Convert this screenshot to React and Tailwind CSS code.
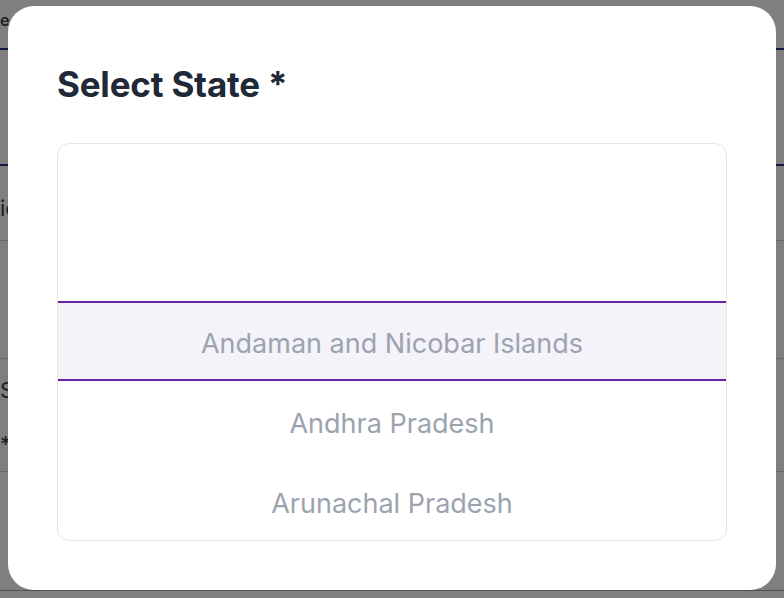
import { useState } from "react";

const states = ["Andaman and Nicobar Islands", "Andhra Pradesh", "Arunachal Pradesh"];

const App = () => {
  const [selected] = useState(0);

  return (
    <div className="relative h-screen w-full overflow-hidden bg-white font-['Inter',sans-serif] text-[#374151]">
      {/* page behind the modal */}
      <div className="flex flex-col">
        <div className="h-[48px] pt-[8px] text-[16px] font-semibold">e *</div>
        <div className="h-[2px] bg-[#1e3a8a]"></div>
        <div className="h-[114px]"></div>
        <div className="h-[2px] bg-[#1e3a8a]"></div>
        <div className="h-[74px] flex items-center pt-[10px] text-[22px]">ic</div>
        <div className="h-px bg-[#d1d5db]"></div>
        <div className="h-[117px]"></div>
        <div className="h-px bg-[#d1d5db]"></div>
        <div className="h-[48px] flex items-end text-[22px]">S</div>
        <div className="h-[64px] flex items-center pt-[10px] text-[22px]">*</div>
        <div className="h-px bg-[#d1d5db]"></div>
        <div className="h-[118px]"></div>
        <div className="h-px bg-[#9ca3af]"></div>
      </div>

      {/* overlay */}
      <div className="absolute inset-0 bg-black/50 flex items-start justify-center pt-[6px]">
        <div className="w-[768px] h-[584px] bg-white rounded-[26px] px-[49px] pt-[60px]">
          <h2 className="text-[35px] leading-[36px] font-bold text-[#1f2937] tracking-[-0.2px]">Select State *</h2>

          <div className="mt-[41px] h-[398px] border-[1.5px] border-[#e5e7eb] rounded-xl overflow-hidden flex flex-col">
            <div className="h-[157px] shrink-0"></div>
            {states.map((s, i) => (
              <div
                key={s}
                className={
                  i === selected
                    ? "h-[80px] shrink-0 flex items-center justify-center border-y-2 border-[#6b21a8] bg-[#f5f3fa] pt-[7px] text-[27px] text-[#9ca3af]"
                    : "h-[80px] shrink-0 flex items-center justify-center pt-[7px] text-[27px] text-[#9ca3af]"
                }
              >
                {s}
              </div>
            ))}
          </div>
        </div>
      </div>
    </div>
  );
};

export default App;
